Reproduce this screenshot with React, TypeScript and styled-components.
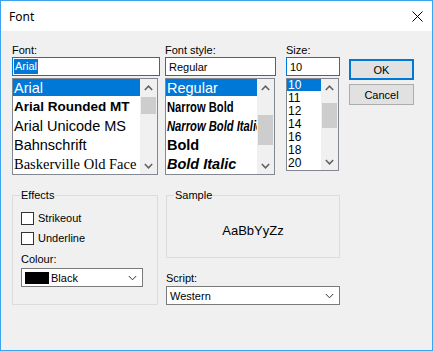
import React from "react";
import styled, { createGlobalStyle } from "styled-components";

interface listItemType {
  label: string;
  family?: string;
  size?: number;
  weight?: number;
  italic?: boolean;
  narrow?: boolean;
  selected?: boolean;
}

const SANS = `"Liberation Sans", Arial, sans-serif`;
const SERIF = `"Liberation Serif", "Times New Roman", serif`;

const fontItems: listItemType[] = [
  { label: "Arial", selected: true },
  { label: "Arial Rounded MT", weight: 700, size: 13.5 },
  { label: "Arial Unicode MS" },
  { label: "Bahnschrift" },
  { label: "Baskerville Old Face", family: SERIF, size: 14.5 },
];

const styleItems: listItemType[] = [
  { label: "Regular", selected: true },
  { label: "Narrow Bold", weight: 700, size: 14, narrow: true },
  { label: "Narrow Bold Italic", weight: 700, italic: true, size: 14, narrow: true },
  { label: "Bold", weight: 700 },
  { label: "Bold Italic", weight: 700, italic: true },
];

const sizeItems: listItemType[] = ["10", "11", "12", "14", "16", "18", "20"].map(
  (s, i) => ({ label: s, size: 12, selected: i === 0 })
);

const GlobalStyle = createGlobalStyle`
  html, body {
    margin: 0;
    padding: 0;
    background: #ffffff;
  }
  body {
    font-family: ${SANS};
    font-size: 11px;
    color: #000000;
  }
`;

const Chevron = ({ up, color = "#606060", w = 1.5 }: { up?: boolean; color?: string; w?: number }) => (
  <svg width="9" height="6" viewBox="0 0 9 6">
    <path
      d={up ? "M0.8 5 L4.5 1.2 L8.2 5" : "M0.8 1 L4.5 4.8 L8.2 1"}
      fill="none"
      stroke={color}
      strokeWidth={w}
    />
  </svg>
);

const List = ({
  items,
  width,
  rowHeight,
  lineHeight,
  thumbOffset,
  thumbSize,
}: {
  items: listItemType[];
  width: number;
  rowHeight: number;
  lineHeight: number;
  thumbOffset: number;
  thumbSize: number;
}) => (
  <ListBox $width={width}>
    <ListItems>
      {items.map((item, idx) => (
        <ListItem
          key={idx}
          $height={rowHeight}
          $line={lineHeight}
          $family={item.family ?? SANS}
          $size={item.size ?? 14.5}
          $weight={item.weight ?? 400}
          $italic={!!item.italic}
          $selected={!!item.selected}
        >
          {item.narrow ? <NarrowText>{item.label}</NarrowText> : item.label}
        </ListItem>
      ))}
    </ListItems>
    <ScrollBar>
      <ScrollArrow>
        <Chevron up />
      </ScrollArrow>
      <ScrollTrack>
        <Thumb $offset={thumbOffset} $size={thumbSize} />
      </ScrollTrack>
      <ScrollArrow>
        <Chevron />
      </ScrollArrow>
    </ScrollBar>
  </ListBox>
);

const App = () => {
  return (
    <>
      <GlobalStyle />
      <Window>
        <TitleBar>
          <span>Font</span>
          <svg width="11" height="11" viewBox="0 0 11 11">
            <path d="M0.5 0.5 L10.5 10.5 M10.5 0.5 L0.5 10.5" stroke="#000" strokeWidth="1" />
          </svg>
        </TitleBar>
        <Body>
          <TopRow>
            <Column $width={148} $gap={5}>
              <FieldLabel>Font:</FieldLabel>
              <InputBox>
                <SelectedText>Arial</SelectedText>
              </InputBox>
              <List items={fontItems} width={146} rowHeight={19} lineHeight={18} thumbOffset={1} thumbSize={17} />
            </Column>
            <Column $width={111} $gap={10}>
              <FieldLabel>Font style:</FieldLabel>
              <InputBox>Regular</InputBox>
              <List items={styleItems} width={110} rowHeight={19} lineHeight={18} thumbOffset={19} thumbSize={30} />
            </Column>
            <Column $width={54} $gap={9}>
              <FieldLabel>Size:</FieldLabel>
              <InputBox>10</InputBox>
              <List items={sizeItems} width={53} rowHeight={13} lineHeight={13} thumbOffset={7} thumbSize={25} />
            </Column>
            <ButtonColumn>
              <DialogButton $primary>OK</DialogButton>
              <DialogButton>Cancel</DialogButton>
            </ButtonColumn>
          </TopRow>
          <BottomRow>
            <GroupBox $width={146} $height={116}>
              <GroupLegend>Effects</GroupLegend>
              <EffectsBody>
                <CheckRow>
                  <CheckBox />
                  Strikeout
                </CheckRow>
                <CheckRow>
                  <CheckBox />
                  Underline
                </CheckRow>
                <SmallLabel>Colour:</SmallLabel>
                <DropDown $width={122}>
                  <Swatch />
                  <DropText>Black</DropText>
                  <Chevron color="#333" w={1} />
                </DropDown>
              </EffectsBody>
            </GroupBox>
            <RightColumn>
              <GroupBox $width={174} $height={69}>
                <GroupLegend>Sample</GroupLegend>
                <SampleText>AaBbYyZz</SampleText>
              </GroupBox>
              <ScriptLabel>Script:</ScriptLabel>
              <DropDown $width={174}>
                <DropText>Western</DropText>
                <Chevron color="#333" w={1} />
              </DropDown>
            </RightColumn>
          </BottomRow>
        </Body>
      </Window>
    </>
  );
};

export default App;

const Window = styled.div`
  width: 433px;
  height: 351px;
  box-sizing: border-box;
  border: 1px solid #3ba3ef;
  background: #f0f0f0;
  display: flex;
  flex-direction: column;
  overflow: hidden;
`;

const TitleBar = styled.div`
  height: 30px;
  flex-shrink: 0;
  background: #ffffff;
  display: flex;
  align-items: center;
  justify-content: space-between;
  padding: 0 9px 0 8px;
  font-family: "Noto Sans", "Open Sans", sans-serif;
  font-size: 12px;
  color: #000000;
`;

const Body = styled.div`
  padding: 12px 0 0 11px;
  display: flex;
  flex-direction: column;
`;

const TopRow = styled.div`
  display: flex;
  align-items: flex-start;
`;

const Column = styled.div<{ $width: number; $gap: number }>`
  width: ${(p) => p.$width}px;
  margin-right: ${(p) => p.$gap}px;
  display: flex;
  flex-direction: column;
`;

const FieldLabel = styled.div`
  height: 14px;
  line-height: 14px;
`;

const InputBox = styled.div`
  height: 19px;
  box-sizing: border-box;
  border: 1px solid #0078d7;
  background: #ffffff;
  display: flex;
  align-items: center;
  padding-left: 3px;
  white-space: nowrap;
  overflow: hidden;
`;

const SelectedText = styled.span`
  margin-left: -2px;
  padding: 0 1px;
  line-height: 15px;
  background: #0078d7;
  color: #ffffff;
`;

const ListBox = styled.div<{ $width: number }>`
  width: ${(p) => p.$width}px;
  margin-top: 2px;
  box-sizing: border-box;
  border: 1px solid #828790;
  background: #ffffff;
  display: flex;
`;

const ListItems = styled.div`
  flex: 1;
  min-width: 0;
  overflow: hidden;
`;

const ListItem = styled.div<{
  $height: number;
  $line: number;
  $family: string;
  $size: number;
  $weight: number;
  $italic: boolean;
  $selected: boolean;
}>`
  height: ${(p) => p.$height}px;
  line-height: ${(p) => p.$line}px;
  font-family: ${(p) => p.$family};
  font-size: ${(p) => p.$size}px;
  font-weight: ${(p) => p.$weight};
  font-style: ${(p) => (p.$italic ? "italic" : "normal")};
  white-space: nowrap;
  overflow: hidden;
  padding-left: 1px;
  background: ${(p) =>
    p.$selected
      ? `linear-gradient(#0078d7, #0078d7) no-repeat 0 0 / 100% ${p.$line - 1}px`
      : "transparent"};
  color: ${(p) => (p.$selected ? "#ffffff" : "#000000")};
`;

const NarrowText = styled.span`
  display: inline-block;
  transform: scaleX(0.8);
  transform-origin: left center;
`;

const ScrollBar = styled.div`
  width: 17px;
  flex-shrink: 0;
  background: #f0f0f0;
  display: flex;
  flex-direction: column;
`;

const ScrollArrow = styled.div`
  height: 17px;
  display: flex;
  align-items: center;
  justify-content: center;
`;

const ScrollTrack = styled.div`
  flex: 1;
  display: flex;
  flex-direction: column;
`;

const Thumb = styled.div<{ $offset: number; $size: number }>`
  margin: ${(p) => p.$offset}px 1px 0;
  height: ${(p) => p.$size}px;
  background: #cdcdcd;
`;

const ButtonColumn = styled.div`
  padding-top: 16px;
  display: flex;
  flex-direction: column;
  gap: 4px;
`;

const DialogButton = styled.div<{ $primary?: boolean }>`
  width: 65px;
  height: 21px;
  box-sizing: border-box;
  border: ${(p) => (p.$primary ? "2px solid #0078d7" : "1px solid #adadad")};
  background: #e1e1e1;
  display: flex;
  align-items: center;
  justify-content: center;
  font-size: 11px;
`;

const BottomRow = styled.div`
  margin-top: 14px;
  display: flex;
  align-items: flex-start;
  gap: 8px;
`;

const GroupBox = styled.fieldset<{ $width: number; $height: number }>`
  width: ${(p) => p.$width}px;
  height: ${(p) => p.$height}px;
  box-sizing: border-box;
  margin: 0;
  padding: 0;
  min-width: 0;
  border: 1px solid #dcdcdc;
`;

const GroupLegend = styled.legend`
  margin-left: 7px;
  padding: 0 1px;
  line-height: 13px;
  font-size: 11px;
`;

const EffectsBody = styled.div`
  padding: 10px 0 0 8px;
  display: flex;
  flex-direction: column;
`;

const CheckRow = styled.div`
  height: 13px;
  margin-bottom: 7px;
  display: flex;
  align-items: center;
  gap: 4px;
  line-height: 13px;
`;

const CheckBox = styled.div`
  width: 13px;
  height: 13px;
  box-sizing: border-box;
  border: 1px solid #333333;
  background: #ffffff;
`;

const SmallLabel = styled.div`
  margin-top: 1px;
  line-height: 13px;
`;

const DropDown = styled.div<{ $width: number }>`
  width: ${(p) => p.$width}px;
  height: 19px;
  margin-top: 2px;
  box-sizing: border-box;
  border: 1px solid #7a7a7a;
  background: #ffffff;
  display: flex;
  align-items: center;
  padding: 0 5px 0 3px;
  gap: 2px;
`;

const Swatch = styled.div`
  width: 24px;
  height: 12px;
  background: #000000;
`;

const DropText = styled.span`
  flex: 1;
`;

const RightColumn = styled.div`
  display: flex;
  flex-direction: column;
`;

const SampleText = styled.div`
  margin-top: 21px;
  line-height: 16px;
  text-align: center;
  font-size: 13px;
`;

const ScriptLabel = styled.div`
  margin-top: 14px;
  line-height: 13px;
  margin-bottom: -1px;
`;
